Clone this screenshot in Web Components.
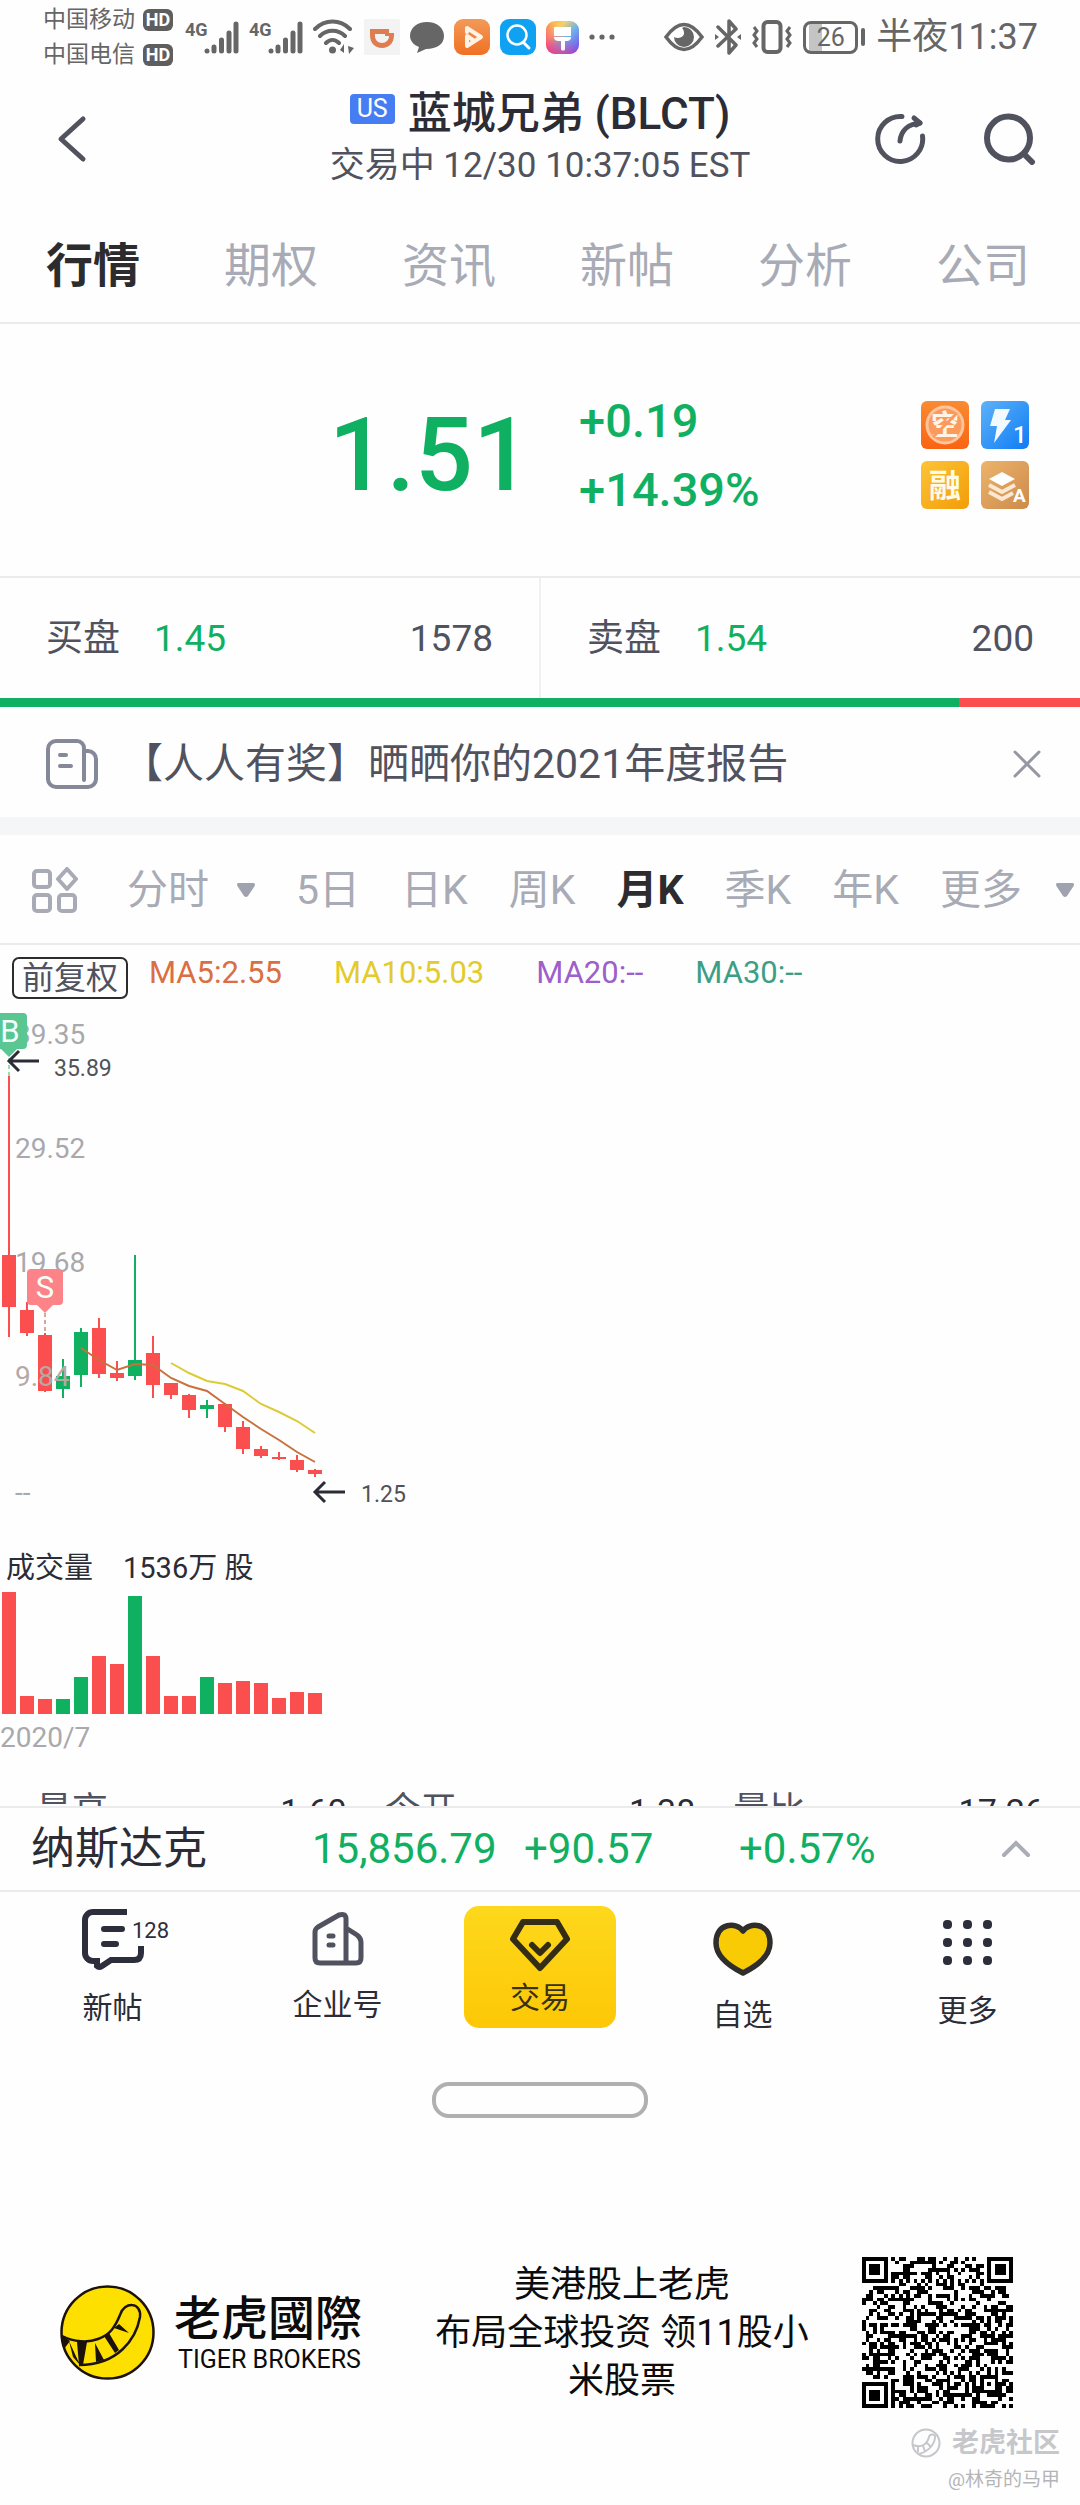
<!DOCTYPE html>
<html lang="zh-CN">
<head>
<meta charset="utf-8">
<meta name="viewport" content="width=device-width, initial-scale=1">
<title>蓝城兄弟 (BLCT)</title>
<style>
  :root {
    --green: #10b062;
    --red: #fb4f4f;
    --ink: #2b2c36;
    --slate: #50525e;
    --mute: #a8abb5;
    --line: #ebebec;
  }
  body {
    margin: 0;
    background: #fefefe;
    color: var(--ink);
    font-family: Roboto, "Noto Sans CJK SC", sans-serif;
  }
</style>
</head>
<body>
<stock-page></stock-page>
<script>
const BASE = `
  :host { display: block; }
  * { box-sizing: border-box; }
  svg { display: block; flex: none; }
  button { font: inherit; color: inherit; background: none; border: 0; padding: 0; margin: 0; cursor: pointer; }
  a { color: inherit; text-decoration: none; }
`;
function define(name, css, html, setup) {
  const template = document.createElement('template');
  template.innerHTML = `<style>${BASE}${css}</style>${html}`;
  customElements.define(name, class extends HTMLElement {
    connectedCallback() {
      if (this.shadowRoot) return;
      const root = this.attachShadow({ mode: 'open' });
      root.append(template.content.cloneNode(true));
      if (setup) setup(root, this);
    }
  });
}

/* ---------- phone status bar ---------- */
const network = `
  <svg width="54" height="36" viewBox="0 0 54 36">
    <text x="0" y="17" font-size="18" font-weight="700" fill="#666">4G</text>
    <g stroke="#666" stroke-width="5" stroke-linecap="round">
      <path d="M22 32v0M29 28v4M36.500 21v11M44 14v18M51 5v27"/>
    </g>
  </svg>`;
define('phone-status', `
  :host { display: flex; align-items: center; gap: 10px; padding: 2px 42px 0 43px; color: #666; }
  .carriers { font-size: 23px; line-height: 35px; margin-right: 2px; }
  .carriers div { display: flex; align-items: center; gap: 8px; }
  b { font-size: 18px; line-height: 22px; width: 30px; text-align: center; color: #fff; background: #5e5e5e; border-radius: 6px; }
  .right { display: flex; align-items: center; gap: 11px; margin-left: auto; }
  .battery { display: flex; align-items: center; gap: 3px; }
  .level { width: 55px; border: 3px solid #666; border-radius: 8px; font-size: 25px; line-height: 27px; text-align: center;
    background: linear-gradient(90deg, transparent 3px, #c4c4c4 3px, #c4c4c4 16px, transparent 16px); }
  .tip { width: 4px; height: 18px; border-radius: 2px; background: #666; }
  time { font-size: 36px; line-height: 44px; white-space: nowrap; }
`, `
  <div class="carriers"><div>中国移动<b>HD</b></div><div>中国电信<b>HD</b></div></div>
  ${network}${network}
  <svg width="41" height="36" viewBox="0 0 41 36" fill="none" stroke="#666" stroke-width="4" stroke-linecap="round">
    <path d="M2 10C12 0 27 0 37 10M7 17c7-7 18-7 25 0M13 24c4-4 9-4 13 0"/>
    <circle cx="19.500" cy="31" r="3.500" fill="#666" stroke="none"/>
    <path d="M27 31l4-6v9zM35 27l6 2-5 6z" fill="#666" stroke="none"/>
  </svg>
  <svg width="36" height="36" viewBox="0 0 36 36">
    <rect width="36" height="36" rx="2" fill="#f3f3f3"/>
    <path d="M6 10h19v4h5v2c0 8-5 13-12 13S6 24 6 16zM11 15v2c0 4 3 7 7 7s7-3 7-7h-4v-2z" fill="#dd7d50" fill-rule="evenodd"/>
  </svg>
  <svg width="34" height="36" viewBox="0 0 34 36"><path d="M17 3c10 0 17 6 17 14S27 30 16 30l-9 4 2-6C3 26 0 21 0 17 0 9 7 3 17 3z" fill="#666"/></svg>
  <svg width="36" height="36" viewBox="0 0 36 36">
    <defs><linearGradient id="o" x2="0" y2="1"><stop stop-color="#f39a58"/><stop offset="1" stop-color="#f07024"/></linearGradient></defs>
    <rect width="36" height="36" rx="9" fill="url(#o)"/>
    <path d="M13 13V9l14 9-14 9V17l6 4" fill="none" stroke="#fff3e8" stroke-width="4" stroke-linejoin="round" stroke-linecap="round"/>
  </svg>
  <svg width="36" height="36" viewBox="0 0 36 36">
    <rect width="36" height="36" rx="9" fill="#10a2f2"/>
    <circle cx="17" cy="16" r="9.500" fill="none" stroke="#fff" stroke-width="2.500"/><path d="M23 23l6 6" stroke="#fff" stroke-width="3" stroke-linecap="round"/>
  </svg>
  <svg width="33" height="36" viewBox="0 0 33 36">
    <defs><linearGradient id="r" x2="1" y2="1"><stop stop-color="#ffae3a"/><stop offset=".3" stop-color="#f7cf6a"/><stop offset=".55" stop-color="#6fb4e8"/><stop offset="1" stop-color="#7a3df0"/></linearGradient>
    <linearGradient id="r2" x1="0" y1="1" x2="1" y2="0"><stop stop-color="#ff2d78"/><stop offset=".6" stop-color="#ff2d78" stop-opacity="0"/></linearGradient></defs>
    <rect y="2" width="33" height="33" rx="9" fill="url(#r)"/><rect y="2" width="33" height="33" rx="9" fill="url(#r2)"/>
    <path d="M8 8h17v9H8zM8 18h17c0 4-3 4-6 4v8c0 2-4 2-4 0v-8c-4 0-7 0-7-4z" fill="#fff"/>
  </svg>
  <svg width="26" height="36" viewBox="0 0 26 36" fill="#666"><circle cx="3" cy="18" r="2.600"/><circle cx="13" cy="18" r="2.600"/><circle cx="23" cy="18" r="2.600"/></svg>
  <div class="right">
    <svg width="40" height="36" viewBox="0 0 40 36">
      <path d="M2 18Q20-7 38 18Q20 43 2 18z" fill="none" stroke="#666" stroke-width="3.500"/>
      <path d="M20 8a10 10 0 1 1-10 10c3 2 9 1 10-3 0-2 0-4-2-6z" fill="#666"/>
    </svg>
    <svg width="26" height="36" viewBox="0 0 26 36" fill="none" stroke="#666" stroke-width="3.500" stroke-linejoin="round">
      <path d="M3 8l18 18-7 8V2l7 8L3 27" stroke-linecap="round"/><path d="M0 15l4 3-4 3zM26 15l-4 3 4 3z" fill="#666" stroke="none"/>
    </svg>
    <svg width="40" height="36" viewBox="0 0 40 36" fill="none" stroke="#666">
      <rect x="11.500" y="3" width="17" height="30" rx="4" stroke-width="4"/>
      <path d="M2 8l3 4-3 4 3 4-3 4 3 4M38 8l-3 4 3 4-3 4 3 4-3 4" stroke-width="3"/>
    </svg>
    <div class="battery"><div class="level">26</div><div class="tip"></div></div>
    <time>半夜11:37</time>
  </div>
`);

/* ---------- title ---------- */
define('stock-header', `
  :host { display: grid; grid-template-columns: 1fr auto 1fr; align-items: center; padding: 15px 44px; }
  .back { padding-left: 13px; }
  .mid { text-align: center; }
  h1 { margin: 0; display: flex; align-items: center; justify-content: center; gap: 13px; font-size: 44px; font-weight: 500; line-height: 54px; }
  .us { align-self: flex-start; margin-top: 7px; width: 45px; border-radius: 4px; background: #477df3; color: #fff; font-size: 25px; font-weight: 400; line-height: 30px; }
  p { margin: 0; font-size: 35px; line-height: 50px; color: var(--slate); }
  .tools { display: flex; justify-content: flex-end; gap: 58px; }
`, `
  <button class="back" aria-label="返回"><svg width="32" height="50" viewBox="0 0 32 50"><path d="M26 5L4 25l22 20" fill="none" stroke="#50525e" stroke-width="5" stroke-linecap="round" stroke-linejoin="round"/></svg></button>
  <div class="mid">
    <h1><span class="us">US</span><span>蓝城兄弟 (BLCT)</span></h1>
    <p>交易中 12/30 10:37:05 EST</p>
  </div>
  <div class="tools">
    <button aria-label="分享"><svg width="51" height="52" viewBox="0 0 51 52" fill="none" stroke="#50525e" stroke-width="5" stroke-linecap="round">
      <path d="M27 3.500A22.500 22.500 0 1 0 47.500 23"/><path d="M25 28c1-10 8-17 20-18" /><path d="M39 5l6 5-4 2" stroke-linejoin="round"/></svg></button>
    <button aria-label="搜索"><svg width="52" height="52" viewBox="0 0 52 52" fill="none" stroke="#50525e" stroke-linecap="round">
      <circle cx="24.500" cy="25" r="21.500" stroke-width="6"/><path d="M41 42l7 7" stroke-width="6"/></svg></button>
  </div>
`);

define('quote-tabs', `
  :host { display: flex; justify-content: space-between; padding: 30px 50px 26px 46px; border-bottom: 2px solid var(--line); }
  button { font-size: 47px; line-height: 60px; color: var(--mute); }
  button[aria-selected=true] { color: #2c2c2e; font-weight: 700; }
`, ['行情','期权','资讯','新帖','分析','公司'].map((t, i) => `<button role="tab" aria-selected="${i === 0}">${t}</button>`).join(''));

/* ---------- price ---------- */
define('price-panel', `
  :host { display: flex; align-items: center; padding: 62px 51px 52px 0; border-bottom: 2px solid var(--line); color: var(--green); font-weight: 500; }
  .last { width: 52%; text-align: right; font-size: 102px; line-height: 120px; padding-right: 4px; }
  .chg { padding-left: 44px; font-size: 47px; line-height: 69px; }
  .tags { margin-left: auto; display: grid; grid-template-columns: 48px 48px; gap: 12px; }
`, `
  <div class="last">1.51</div>
  <div class="chg"><div>+0.19</div><div>+14.39%</div></div>
  <div class="tags">
    <svg width="48" height="48" viewBox="0 0 48 48">
      <defs><linearGradient id="a" x2="0" y2="1"><stop stop-color="#f98b32"/><stop offset="1" stop-color="#f96412"/></linearGradient></defs>
      <rect width="48" height="48" rx="6" fill="url(#a)"/>
      <circle cx="24" cy="24" r="18" fill="#fb9a5a" stroke="#fdc59c" stroke-width="3"/>
      <text x="24" y="34" text-anchor="middle" font-size="28" font-weight="700" fill="#fff4e6">空</text>
      <path d="M12 36L36 12" stroke="#fb9a5a" stroke-width="3"/></svg>
    <svg width="48" height="48" viewBox="0 0 48 48">
      <defs><linearGradient id="b" x2="1" y2="1"><stop stop-color="#5db2f8"/><stop offset="1" stop-color="#0f7cf5"/></linearGradient></defs>
      <rect width="48" height="48" rx="6" fill="url(#b)"/>
      <path d="M14 8h15l-5 11h6L13 42l3-17H9z" fill="#f2faff"/>
      <text x="32" y="42" font-size="24" fill="#fff">1</text></svg>
    <svg width="48" height="48" viewBox="0 0 48 48">
      <defs><linearGradient id="c" x2="1" y2="1"><stop stop-color="#fcc438"/><stop offset="1" stop-color="#f39c08"/></linearGradient></defs>
      <rect width="48" height="48" rx="6" fill="url(#c)"/>
      <text x="24" y="36" text-anchor="middle" font-size="32" font-weight="700" fill="#fffbe6">融</text></svg>
    <svg width="48" height="48" viewBox="0 0 48 48">
      <defs><linearGradient id="d" x2="1" y2="1"><stop stop-color="#ecb46c"/><stop offset="1" stop-color="#cd8a4a"/></linearGradient></defs>
      <rect width="48" height="48" rx="6" fill="url(#d)"/>
      <path d="M21 11l13 7-13 7-13-7z" fill="#fff"/><path d="M8 24l13 7 13-7M8 31l13 7 11-6" fill="none" stroke="#fbe8d3" stroke-width="4"/>
      <text x="32" y="41" font-size="19" font-weight="700" fill="#fff">A</text></svg>
  </div>
`);

define('order-book', `
  .row { display: flex; }
  .side { flex: 1; display: flex; gap: 34px; padding: 31px 46px 29px; font-size: 37px; line-height: 60px; color: var(--slate); }
  .side + .side { border-left: 2px solid #f0f0f1; }
  .side i { font-style: normal; color: var(--green); }
  .side b { font-weight: 400; margin-left: auto; }
  .bar { display: flex; height: 9px; background: var(--red); }
  .bar div { flex: 0 0 calc(100% * 1578 / 1778); background: var(--green); }
`, `
  <div class="row">
    <div class="side"><span>买盘</span><i>1.45</i><b>1578</b></div>
    <div class="side"><span>卖盘</span><i>1.54</i><b>200</b></div>
  </div>
  <div class="bar"><div></div></div>
`);

define('notice-bar', `
  :host { display: flex; align-items: center; padding: 32px 38px 28px 46px; color: var(--slate); }
  a { flex: 1; margin-left: 24px; font-size: 41px; line-height: 50px; }
`, `
  <svg width="52" height="50" viewBox="0 0 52 50" fill="none" stroke="#858898" stroke-width="4" stroke-linecap="round">
    <path d="M38 12V9a7 7 0 0 0-7-7H10a8 8 0 0 0-8 8v30a8 8 0 0 0 8 8h32a8 8 0 0 0 8-8V20a8 8 0 0 0-8-8h-4v29"/><path d="M14 16h6M14 27h11"/>
  </svg>
  <a href="#report">【人人有奖】晒晒你的2021年度报告</a>
  <button aria-label="关闭"><svg width="30" height="30" viewBox="0 0 30 30"><path d="M3 3l24 24M27 3L3 27" stroke="#9598a2" stroke-width="3" stroke-linecap="round"/></svg></button>
`);

/* ---------- chart ---------- */
const caret = `<svg width="18" height="14" viewBox="0 0 18 14"><path d="M1 0h16q2 1 0 4L11 13q-2 2-4 0L1 4q-2-3 0-4z" fill="#a0a3af"/></svg>`;
define('period-tabs', `
  :host { display: flex; align-items: center; justify-content: space-between; padding: 30px 6px 28px 32px; border-bottom: 2px solid var(--line);
    color: var(--mute); font-size: 41px; line-height: 50px; }
  button { display: flex; align-items: center; gap: 28px; white-space: nowrap; }
  .layout { padding-right: 8px; }
  .more { gap: 34px; }
  [aria-selected=true] { color: #2c2c2e; font-weight: 700; }
`, `
  <button class="layout" aria-label="布局"><svg width="46" height="46" viewBox="0 0 46 46" fill="none" stroke="#a8abb5" stroke-width="4">
    <rect x="2" y="4" width="16" height="16" rx="3"/><path d="M35 2l9 10-9 10-9-10z" stroke-linejoin="round"/><rect x="2" y="28" width="16" height="16" rx="3"/><rect x="27" y="28" width="16" height="16" rx="3"/></svg></button>
  <button>分时 ${caret}</button><button>5日</button><button>日K</button><button>周K</button>
  <button aria-selected="true">月K</button><button>季K</button><button>年K</button><button class="more">更多 ${caret}</button>
`);

define('ma-legend', `
  :host { display: flex; align-items: flex-start; gap: 21px; padding: 12px 12px 1px; }
  button { width: 116px; border: 2px solid #2c2c2e; border-radius: 7px; font-size: 32px; line-height: 38px; color: var(--slate); }
  ul { display: flex; gap: 52px; list-style: none; margin: 0; padding: 1px 0 0; font-size: 31px; line-height: 30px; }
`, `
  <button>前复权</button>
  <ul><li style="color:#d96f42">MA5:2.55</li><li style="color:#e3cb2d">MA10:5.03</li><li style="color:#9d5fc9">MA20:--</li><li style="color:#3d9e87">MA30:--</li></ul>
`);

// [body top, body bottom, wick top, wick bottom, rising?, volume bar height]
const months = [
  [255,307,76,337,0,122],[310,333,302,336,0,18],[335,391,333,392,0,15],[376,389,359,398,1,15],
  [332,375,328,387,1,37],[328,374,318,378,0,58],[373,378,361,381,0,50],[360,376,255,380,1,118],
  [353,385,336,398,0,58],[383,395,383,399,0,18],[395,410,394,418,0,18],[405,409,400,418,1,37],
  [404,427,403,432,0,31],[427,449,421,454,0,33],[449,456,446,458,0,31],[457,459,452,460,0,16],
  [460,470,455,472,0,22],[470,474,469,477,0,21]
];
const color = up => up ? '#0fb060' : '#fb4f4f';
const line = (start, ys) => ys.map((y, i) => `${9 + 18 * (start + i)},${y}`).join(' ');
define('kline-chart', `svg { width: 100%; height: auto; }`, `
  <svg viewBox="0 0 1080 540" role="img" aria-label="月K">
    <g font-size="28" fill="#a9a9ad"><text x="15" y="44">39.35</text><text x="15" y="158">29.52</text><text x="15" y="272">19.68</text><text x="15" y="502">--</text></g>
    ${months.map(([t, b, h, l, up], i) => `<g fill="${color(up)}"><rect x="${2 + 18 * i}" y="${t}" width="14" height="${b - t}"/><rect x="${8 + 18 * i}" y="${h}" width="2" height="${l - h}"/></g>`).join('')}
    <text x="15" y="386" font-size="28" fill="#b5a8a8">9.84</text>
    <polyline points="${line(4, [348,360,370,364,365,378,386,391,404,417,429,440,452,462])}" fill="none" stroke="#c9713c" stroke-width="2"/>
    <polyline points="${line(9, [363,373,381,384,391,404,412,421,433])}" fill="none" stroke="#dccb38" stroke-width="2"/>
    <g stroke-dasharray="4 3" stroke-width="2"><path d="M9 58v18" stroke="#9ed8bb"/><path d="M45 313v20" stroke="#d9a79a"/></g>
    <path d="M-9 13H23q4 0 4 4V45q0 4-4 4H17l-8 8-8-8h-10z" fill="#5ac793"/>
    <path d="M31 269H59q4 0 4 4V301q0 4-4 4H53l-8 8-8-8H31q-4 0-4-4V273q0-4 4-4z" fill="#fc8388"/>
    <g font-size="31" fill="#f4fff9" text-anchor="middle" font-weight="400"><text x="10" y="42">B</text><text x="45" y="298">S</text></g>
    <g fill="none" stroke="#2b2c36" stroke-width="3"><path d="M39 61H9M19 51L9 61l10 10M345 492H315M325 482l-10 10 10 10"/></g>
    <g font-size="23" fill="#50525a"><text x="54" y="76">35.89</text><text x="361" y="502">1.25</text></g>
  </svg>
`);
define('volume-chart', `
  .head { display: flex; gap: 30px; padding: 8px 6px 0; font-size: 29px; line-height: 40px; }
  svg { width: 100%; height: auto; }
  .date { padding-top: 2px; font-size: 28px; line-height: 44px; color: #a9a9ad; }
`, `
  <div class="head"><span>成交量</span><span>1536万 股</span></div>
  <svg viewBox="0 0 1080 126" role="img" aria-label="成交量">
    ${months.map((m, i) => `<rect x="${2 + 18 * i}" y="${126 - m[5]}" width="14" height="${m[5]}" fill="${color(m[4])}"/>`).join('')}
  </svg>
  <div class="date">2020/7</div>
`);

define('stat-strip', `
  :host { display: grid; grid-template-columns: repeat(3, 1fr); gap: 38px; padding: 0 36px; margin-top: 26px; height: 20px; overflow: hidden; font-size: 36px; line-height: 50px; color: var(--slate); }
  div { display: flex; justify-content: space-between; }
  b { font-size: 34px; font-weight: 400; color: var(--ink); }
`, `<div>最高<b>1.60</b></div><div>今开<b>1.38</b></div><div>量比<b>17.26</b></div>`);

define('index-ticker', `
  :host { display: grid; grid-template-columns: 281px 212px 215px 1fr auto; align-items: center; padding: 16px 48px 16px 31px; border: solid var(--line); border-width: 2px 0; font-size: 42px; line-height: 50px; color: var(--green); }
  strong { font-size: 44px; font-weight: 400; color: var(--ink); }
`, `
  <strong>纳斯达克</strong><span>15,856.79</span><span>+90.57</span><span>+0.57%</span>
  <button aria-label="展开"><svg width="32" height="20" viewBox="0 0 32 20"><path d="M4 16L16 4l12 12" fill="none" stroke="#abadb6" stroke-width="4" stroke-linecap="round"/></svg></button>
`);

/* ---------- bottom navigation ---------- */
define('nav-item', `
  :host { display: flex; justify-content: center; align-items: center; }
  a { display: flex; flex-direction: column; align-items: center; gap: 21px; font-size: 30px; line-height: 36px; }
  :host([primary]) a { gap: 8px; width: 152px; height: 122px; justify-content: center; border-radius: 15px; background: linear-gradient(#fdd81c, #fdc806); color: #3a3012; }
`, `<a href="#"><slot name="icon"></slot><span><slot></slot></span></a>`);
define('app-nav', `
  nav { display: grid; grid-template-columns: 5fr 5fr 4fr 5fr 5fr; min-height: 150px; }
`, `
  <nav>
    <nav-item><svg slot="icon" width="62" height="60" viewBox="0 0 62 60" overflow="visible" fill="none" stroke="#2d2e3c" stroke-width="6">
      <path d="M45 3H11a8 8 0 0 0-8 8v33a8 8 0 0 0 8 8h4v5q2 2 5 0l9-6h23q7 0 7-7v-7"/><path d="M22 20h18M22 35h12" stroke-linecap="round"/>
      <text x="50" y="29" font-size="22" fill="#2d2e3c" stroke="none">128</text></svg>新帖</nav-item>
    <nav-item><svg slot="icon" width="52" height="54" viewBox="0 0 52 54" fill="none" stroke="#50535f" stroke-width="5" stroke-linejoin="round" stroke-linecap="round">
      <path d="M34 51H8q-5 0-5-5V20q0-3 3-5L27 3q7-2 7 4zM34 16l11 7q4 3 4 7v16q0 5-5 5H34"/><path d="M17 24h4M17 33h4"/></svg>企业号</nav-item>
    <nav-item primary><svg slot="icon" width="60" height="54" viewBox="0 0 60 54" fill="none" stroke="#332d15" stroke-width="6" stroke-linejoin="round" stroke-linecap="round">
      <path d="M13 4h34l10 17-27 29L3 21z"/><path d="M22 27l8 8 8-8"/></svg>交易</nav-item>
    <nav-item><svg slot="icon" width="60" height="74" viewBox="0 0 60 74"><path d="M30 29C24 20 3 20 3 41c0 15 17 25 27 30 10-5 27-15 27-30 0-21-21-21-27-12z" fill="#f8cb05" stroke="#2f2e2c" stroke-width="5.500" stroke-linejoin="round"/></svg>自选</nav-item>
    <nav-item><svg slot="icon" width="50" height="66" viewBox="0 0 50 66" fill="#2d2e3c">
      ${[0,1,2].map(r => [0,1,2].map(c => `<rect x="${c * 20}" y="${14 + r * 18}" width="9" height="9" rx="4"/>`).join('')).join('')}</svg>更多</nav-item>
  </nav>
`);
define('home-pill', `
  :host { padding: 40px 0 139px; }
  div { width: 216px; height: 36px; margin: 0 auto; border: 4px solid #b0b0b0; border-radius: 17px; }
`, `<div></div>`);

/* ---------- sharing footer ---------- */
define('qr-code', `svg { width: 151px; height: 151px; }`, `<svg viewBox="0 0 41 41" shape-rendering="crispEdges" role="img" aria-label="二维码"><path fill="#000"/></svg>`, root => {
  const n = 41;
  let seed = 20211230, d = '';
  const rnd = () => (seed = (seed * 1103515245 + 12345) % 2147483648) / 2147483648;
  const finder = (x, y, fx, fy) => {
    const r = Math.max(Math.abs(x - fx), Math.abs(y - fy));
    return r > 4 ? null : (r === 3 || r < 2);
  };
  for (let y = 0; y < n; y++) for (let x = 0; x < n; x++) {
    let on = rnd() < 0.5;
    if (y === 6 || x === 6) on = (x + y) % 2 === 0;
    const a = Math.max(Math.abs(x - 34), Math.abs(y - 34));
    if (a < 3) on = a !== 1;
    for (const [fx, fy] of [[3, 3], [37, 3], [3, 37]]) {
      const f = finder(x, y, fx, fy);
      if (f !== null) on = f;
    }
    if (on) d += `M${x} ${y}h1v1h-1z`;
  }
  root.querySelector('path').setAttribute('d', d);
});
define('brand-footer', `
  :host { display: flex; align-items: center; padding: 0 67px 0 60px; color: #0c0c0c; }
  .name { margin-left: 18px; font-size: 47px; line-height: 54px; font-weight: 500; font-family: Roboto, "Noto Sans CJK TC", sans-serif; }
  .name small { display: block; padding-left: 4px; font-size: 25px; line-height: 28px; font-weight: 400; }
  p { flex: 1; margin: 0; padding: 0 50px 0 70px; text-align: center; font-size: 36px; line-height: 48px; }
`, `
  <svg width="96" height="96" viewBox="0 0 96 96">
    <circle cx="47.500" cy="47.500" r="46" fill="#fde000" stroke="#1c120c" stroke-width="2.500"/>
    <path d="M2 51C14 57 28 58 38 54 50 50 55 42 60 30 64 16 82 17 80 32 76 54 58 80 19 80" fill="none" stroke="#1c120c" stroke-width="2.500"/>
    <path d="M1 50l9 6-6 8zM9 56l11 24-7-8zM17 57h10l-4 23h-4zM35 58l9 17-8 2zM44 51l5-3 10 17-4 3zM54 43l5-4 10 9z" fill="#1c120c"/>
  </svg>
  <div class="name">老虎國際<small>TIGER BROKERS</small></div>
  <p>美港股上老虎<br>布局全球投资 领11股小米股票</p>
  <qr-code></qr-code>
`);
define('community-mark', `
  :host { display: flex; flex-direction: column; align-items: flex-end; padding: 17px 20px 6px; color: #c6c7cb; }
  div { display: flex; align-items: center; gap: 11px; font-size: 27px; line-height: 36px; font-weight: 700; }
  span { font-size: 19px; line-height: 38px; color: #b4b5b9; }
`, `
  <div><svg width="30" height="30" viewBox="0 0 30 30" fill="none" stroke="#c6c7cb" stroke-width="2"><circle cx="15" cy="15" r="13.500"/><path d="M2 17c8 3 14 0 16-8 1-4 7-3 6 1-1 8-9 15-17 16M7 18v6M12 18l2 5M16 15l4 4"/></svg>老虎社区</div>
  <span>@林奇的马甲</span>
`);

define('stock-page', `
  .band { height: 18px; background: #f5f6f8; }
`, `
  <phone-status></phone-status>
  <stock-header></stock-header>
  <quote-tabs role="tablist"></quote-tabs>
  <price-panel></price-panel>
  <order-book></order-book>
  <notice-bar></notice-bar>
  <div class="band"></div>
  <period-tabs></period-tabs>
  <ma-legend></ma-legend>
  <kline-chart></kline-chart>
  <volume-chart></volume-chart>
  <stat-strip></stat-strip>
  <index-ticker></index-ticker>
  <app-nav></app-nav>
  <home-pill></home-pill>
  <brand-footer></brand-footer>
  <community-mark></community-mark>
`);
</script>
</body>
</html>
